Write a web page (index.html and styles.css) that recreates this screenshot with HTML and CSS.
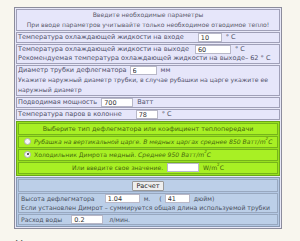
FILE: index.html
```html
<!DOCTYPE html>
<html lang="ru">
<head>
<meta charset="utf-8">
<title>Расчет дефлегматора</title>
<link rel="stylesheet" href="styles.css">
</head>
<body>
<div class="calc">
  <div class="sec lav">
    <div class="cell head">Введите необходимые параметры<br>При вводе параметров учитывайте только необходимое отводимое тепло!</div>
    <div class="cell">Температура охлаждающей жидкости на входе<input class="inp m1" value="10"><span class="unit">° C</span></div>
    <div class="cell">Температура охлаждающей жидкости на выходе<input class="inp m2" value="60"><span class="unit">° C</span><br>Рекомендуемая температура охлаждающей жидкости на выходе– 62 ° C</div>
    <div class="cell">Диаметр трубки дефлегматора<input class="inp m3" value="6"><span class="unit">мм</span><br><span class="hint">Укажите наружный диаметр трубки, в случае рубашки на царге укажите ее наружный диаметр</span></div>
    <div class="cell">Подводимая мощность<input class="inp m4" value="700"><span class="unit">Ватт</span></div>
    <div class="cell">Температура паров в колонне<input class="inp m5" value="78"><span class="unit">° C</span></div>
  </div>
  <div class="sec green">
    <div class="gcell center ghead">Выберите тип дефлегматора или коэфициент теплопередачи</div>
    <div class="gcell gopt"><span class="radio"></span><i>Рубашка на вертикальной царге. В медных царгах среднее 850 Ватт/m<sup>2</sup>C</i></div>
    <div class="gcell gopt"><span class="radio on"></span>Холодильник Димрота медный. <i>Среднее 950 Ватт/m<sup>2</sup>C</i></div>
    <div class="gcell center">Или введите свое значение.<input class="inp m6" value=""><span class="unit">W/m<sup>2</sup>C</span></div>
  </div>
  <div class="sec blue">
    <div class="bcell center bbtn"><button class="btn">Расчет</button></div>
    <div class="bcell">Высота дефлегматора<input class="inp m7" value="1.04"><span class="unit">м.</span><span class="paren">(</span><input class="inp m8" value="41"><span class="unit">дюйм)</span><br>Если установлен Димрот – суммируется общая длина используемой трубки</div>
    <div class="bcell">Расход воды<input class="inp m9" value="0.2"><span class="unit u9">л/мин.</span></div>
  </div>
</div>
<p class="note">Н</p>
</body>
</html>
```
FILE: styles.css
```css
html, body { margin: 0; padding: 0; }
body {
  background: #f8f6ee;
  font-family: "DejaVu Sans", Verdana, sans-serif;
  font-size: 6.5px;
  color: #50506a;
  overflow: hidden;
}
.calc {
  margin: 7px 0 0 14px;
  width: 264px;
  border: 1px solid #8c8c9c;
  padding: 1px;
  background: #e8e8f8;
}
.sec { display: flex; flex-direction: column; gap: 1px; }
.cell {
  border: 1px solid #a0a0b8;
  background: #e6e6fa;
  padding: 0 1px;
  line-height: 9px;
}
.head { text-align: center; color: #5a5a6a; font-size: 6.1px; line-height: 10px; }
.hint { font-size: 6.15px; }
.inp {
  height: 9px;
  border: 1px solid #b8b8c8;
  background: #fff;
  font: inherit;
  font-size: 6.5px;
  line-height: 7px;
  color: #333;
  padding: 0 2px;
  vertical-align: top;
  box-sizing: border-box;
}
.unit { margin-left: 4px; }
.m1 { margin-left: 14px; width: 24px; }
.m2 { margin-left: 6px; width: 36px; }
.m3 { margin-left: 3px; width: 27px; }
.m4 { margin-left: 4px; width: 32px; }
.m5 { margin-left: 14px; width: 22px; }
.m6 { margin-left: 4px; width: 32px; }
.m7 { margin-left: 10px; width: 35px; }
.m8 { margin-left: 3px; width: 25px; }
.m9 { margin-left: 9px; width: 32px; }
.paren { margin-left: 9px; }
.u9 { margin-left: 6px; }
.green {
  margin-top: 1px;
  background: #98e020;
  border: 1px solid #6aa814;
  padding: 1px;
}
.gcell {
  background: #a8f024;
  border: 1px solid #76b41a;
  color: #46680e;
  line-height: 10px;
  padding: 0 3px;
  font-size: 6.1px;
  white-space: nowrap;
}
.gopt { padding-left: 5px; }
.ghead { font-size: 6.4px; }
.center { text-align: center; }
sup { font-size: 4px; vertical-align: top; line-height: 0; position: relative; top: 2px; }
.radio {
  display: inline-block;
  width: 5px; height: 5px;
  border-radius: 50%;
  background: #f6f6f6;
  border: 1px solid #b0b0b0;
  vertical-align: middle;
  position: relative;
  margin-right: 3px;
  top: -1px;
}
.radio.on::after {
  content: "";
  position: absolute;
  left: 1.5px; top: 1.5px;
  width: 2px; height: 2px;
  border-radius: 50%;
  background: #333;
}
.blue {
  margin-top: 1px;
  background: #b4c8e4;
  border: 1px solid #8898b0;
  padding: 1px;
}
.bcell {
  background: #bccfe8;
  border: 1px solid #98a8c0;
  line-height: 9px;
  padding: 0 2px;
  color: #4a5060;
  font-size: 6.2px;
  white-space: nowrap;
}
.bbtn { line-height: 11px; }
.btn {
  font: inherit;
  font-size: 6.5px;
  line-height: 8px;
  height: 10px;
  padding: 0 3px;
  border: 1px solid #999;
  background: #eee;
  color: #222;
  border-radius: 1px;
  vertical-align: middle;
}
.note {
  margin: 9px 0 0 15px;
  font-size: 11px;
  color: #555;
}
```
